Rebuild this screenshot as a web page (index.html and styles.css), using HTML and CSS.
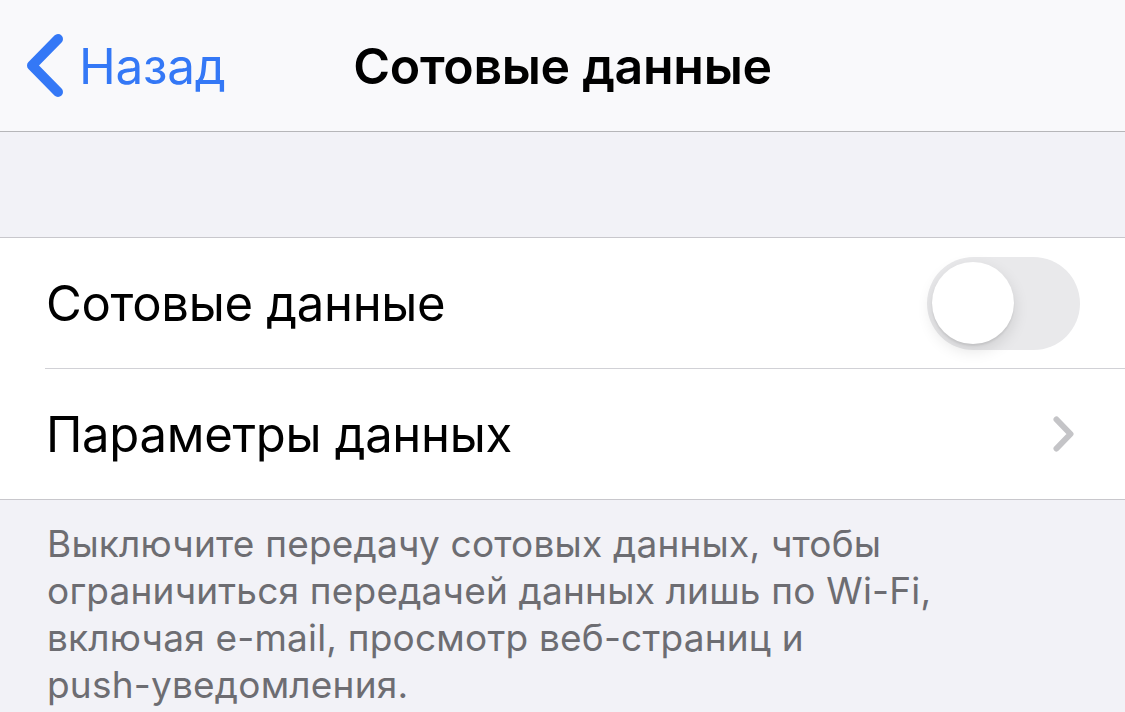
FILE: index.html
```html
<!DOCTYPE html>
<html lang="ru">
<head>
    <meta charset="UTF-8">
    <title>Сотовые данные</title>
    <link rel="stylesheet" href="styles.css">
</head>
<body>
    <header class="navbar">
        <a class="back" href="#">
            <svg class="back-icon" width="36" height="63" viewBox="0 0 36 63">
                <polyline points="31,5 5,31.5 31,58" fill="none" stroke="currentColor" stroke-width="10" stroke-linecap="round" stroke-linejoin="round"/>
            </svg>
            <span>Назад</span>
        </a>
        <h1 class="title">Сотовые данные</h1>
        <div></div>
    </header>

    <div class="spacer"></div>

    <ul class="group">
        <li class="row">
            <div class="row-inner">
                <span class="label">Сотовые данные</span>
                <span class="switch"><span class="knob"></span></span>
            </div>
        </li>
        <li class="row">
            <div class="row-inner">
                <span class="label">Параметры данных</span>
                <svg class="chevron" width="21" height="36" viewBox="0 0 21 36">
                    <polyline points="3.5,3.5 17.5,18 3.5,32.5" fill="none" stroke="currentColor" stroke-width="6" stroke-linecap="round" stroke-linejoin="round"/>
                </svg>
            </div>
        </li>
    </ul>

    <p class="footer">Выключите передачу сотовых данных, чтобы ограничиться передачей данных лишь по Wi-Fi, включая e-mail, просмотр веб-страниц и <span class="nowrap">push-уведомления.</span></p>
</body>
</html>
```

FILE: styles.css
```css
body {
    margin: 0;
    font-family: Inter, "Noto Sans", sans-serif;
    background: #f2f2f7;
    color: #000;
    overflow: hidden;
}
.navbar {
    display: grid;
    grid-template-columns: 1fr auto 1fr;
    align-items: center;
    height: 131px;
    background: #f9f9fb;
    border-bottom: 1px solid #b6b6b9;
}
.back {
    display: flex;
    align-items: center;
    gap: 16px;
    padding-left: 27px;
    color: #3478f6;
    text-decoration: none;
    font-size: 49.5px;
    letter-spacing: -0.3px;
}
.back-icon {
    display: block;
}
.title {
    margin: 0;
    font-size: 50px;
    font-weight: 600;
    letter-spacing: -0.3px;
}
.spacer {
    height: 105px;
    border-bottom: 1px solid #c8c7cc;
}
.group {
    list-style: none;
    margin: 0;
    padding: 0;
    background: #fff;
    border-bottom: 1px solid #c8c7cc;
}
.row {
    padding-left: 45px;
}
.row + .row .row-inner {
    border-top: 1px solid #d1d1d6;
}
.row-inner {
    display: flex;
    align-items: center;
    justify-content: space-between;
    height: 130px;
}
.label {
    padding-left: 1px;
    font-size: 49px;
    letter-spacing: -0.3px;
}
.switch {
    display: flex;
    align-items: center;
    width: 153px;
    height: 93px;
    margin-right: 45px;
    border-radius: 47px;
    background: #e9e9eb;
}
.knob {
    width: 82px;
    height: 82px;
    margin-left: 5px;
    border-radius: 50%;
    background: #fff;
    box-shadow: 0 6px 16px rgba(0,0,0,0.12), 0 2px 2px rgba(0,0,0,0.08);
}
.chevron {
    display: block;
    margin-right: 51px;
    color: #c4c4c7;
}
.footer {
    margin: 0;
    padding: 20px 45px 0 47px;
    font-size: 37px;
    line-height: 47px;
    letter-spacing: 0.2px;
    color: #6d6d72;
}
.nowrap {
    white-space: nowrap;
}
```
